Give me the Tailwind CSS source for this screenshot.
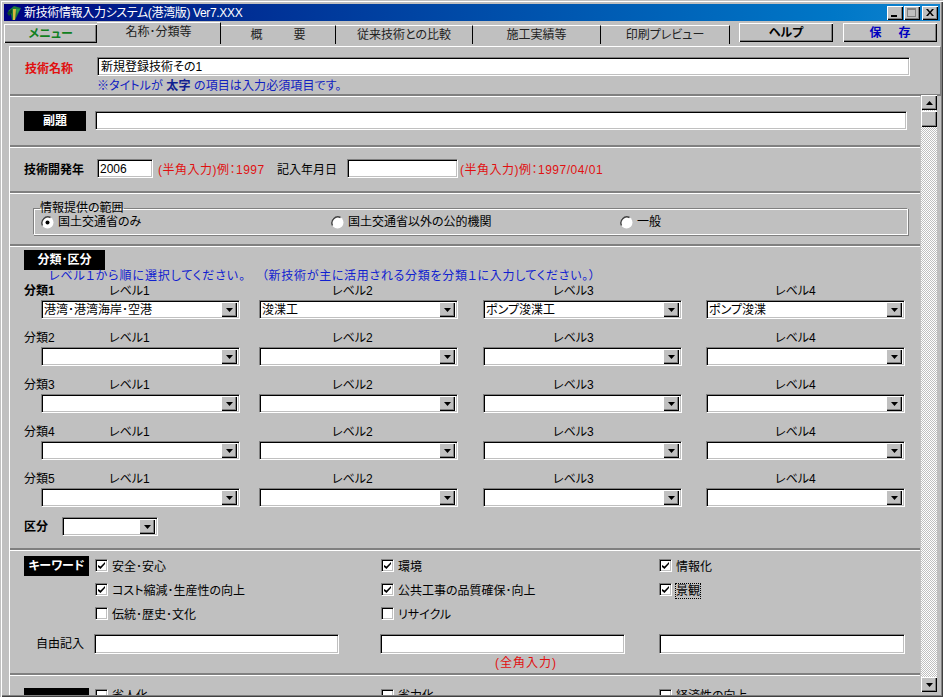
<!DOCTYPE html>
<html lang="ja">
  <head>
    <meta charset="UTF-8" />
    <title>新技術情報入力システム(港湾版) Ver7.XXX</title>
    <script src="https://cdn.jsdelivr.net/npm/@tailwindcss/browser@4"></script>
  </head>
  <body class="bg-[#c0c0c0]">
    <div class="w-[943px] h-[697px] overflow-hidden flex flex-col bg-[#c0c0c0] pt-[4px] pb-[2px] pl-[4px] pr-[3px] text-[12px] leading-[14px] text-black [font-feature-settings:'palt'] font-['Liberation_Sans','Noto_Sans_CJK_JP',sans-serif] shadow-[inset_1px_1px_0_#c0c0c0,inset_2px_2px_0_#fff,inset_-1px_-1px_0_#404040,inset_-2px_-2px_0_#808080]">
      <!-- title bar -->
      <div class="h-[17px] shrink-0 flex items-center justify-between bg-gradient-to-r from-[#000080] to-[#1084d0] pl-[2px] pr-[2px]">
        <div class="flex items-center gap-[2px] text-white">
          <svg width="16" height="16" viewBox="0 0 16 16">
            <path d="M2 6 L8 1 L15 3 L12 9 L9 15 L6 15 L5 9Z" fill="#1f7a3a" />
            <path d="M1 8 L6 4 L6 8 L3 11Z" fill="#0c4a2a" />
            <path d="M7 4 L10 4 L9 15 L7 15Z" fill="#d8b840" />
            <path d="M10 4 L14 4 L11 9Z" fill="#2a9a50" />
          </svg>
          <span class="tracking-[-0.35px]">新技術情報入力システム(港湾版) Ver7.XXX</span>
        </div>
        <div class="flex gap-[1px] items-center">
          <div class="w-[16px] h-[14px] flex items-end pl-[4px] pb-[3px] bg-[#c0c0c0] shadow-[inset_1px_1px_0_#fff,inset_-1px_-1px_0_#000,inset_-2px_-2px_0_#808080]"><div class="w-[6px] h-[2px] bg-black"></div></div>
          <div class="w-[16px] h-[14px] flex items-center justify-center pr-[1px] bg-[#c0c0c0] shadow-[inset_1px_1px_0_#fff,inset_-1px_-1px_0_#000,inset_-2px_-2px_0_#808080]"><div class="w-[9px] h-[9px] border border-t-2 border-[#808080]"></div></div>
          <div class="w-[16px] h-[14px] ml-[1px] flex items-center justify-center pr-[1px] bg-[#c0c0c0] shadow-[inset_1px_1px_0_#fff,inset_-1px_-1px_0_#000,inset_-2px_-2px_0_#808080]">
            <svg width="8" height="7" viewBox="0 0 8 7"><path d="M0 0 L2 0 L4 2.5 L6 0 L8 0 L5 3.5 L8 7 L6 7 L4 4.5 L2 7 L0 7 L3 3.5Z" fill="#000" /></svg>
          </div>
        </div>
      </div>

      <!-- tabs -->
      <div class="h-[22px] mt-[1px] shrink-0 flex items-stretch text-[#222]">
        <div class="w-[93px] mt-[2px] mb-[1px] flex items-center justify-center font-bold text-[#108020] bg-[#c0c0c0] shadow-[inset_1px_1px_0_#fff,inset_-1px_-1px_0_#000,inset_-2px_-2px_0_#808080]">メニュー</div>
        <div class="w-[124px] flex items-center justify-center pb-[3px] border-t border-white border-r border-r-black">名称･分類等</div>
        <div class="w-[115px] mt-[3px] flex items-center justify-center border-t border-white border-r border-r-black"><span class="w-[55px] flex justify-between"><span>概</span><span>要</span></span></div>
        <div class="w-[137px] mt-[3px] flex items-center justify-center border-t border-white border-r border-r-black">従来技術との比較</div>
        <div class="w-[128px] mt-[3px] flex items-center justify-center border-t border-white border-r border-r-black">施工実績等</div>
        <div class="w-[129px] mt-[3px] flex items-center justify-center border-t border-white border-r border-r-black">印刷プレビュー</div>
        <div class="w-[94px] ml-[9px] mt-[1px] mb-[2px] flex items-center justify-center font-bold text-black bg-[#c0c0c0] shadow-[inset_1px_1px_0_#fff,inset_-1px_-1px_0_#000,inset_-2px_-2px_0_#808080]">ヘルプ</div>
        <div class="w-[94px] ml-[10px] mt-[1px] mb-[2px] flex items-center justify-center font-bold text-[#0000c0] bg-[#c0c0c0] shadow-[inset_1px_1px_0_#fff,inset_-1px_-1px_0_#000,inset_-2px_-2px_0_#808080]"><span class="w-[41px] flex justify-between"><span>保</span><span>存</span></span></div>
      </div>

      <!-- tab panel -->
      <div class="flex-1 min-h-0 ml-[5px] mt-[2px] flex flex-col border-l border-white">
        <!-- name section -->
        <div class="h-[50px] shrink-0 border-t border-white border-r border-r-[#808080] mr-[-1px] border-b-2 border-b-[#808080] flex pt-[10px] pl-[15px]">
          <div class="w-[72px] pt-[5px] font-bold text-[#e01010]">技術名称</div>
          <div class="flex flex-col">
            <div class="w-[813px] h-[19px] flex items-center pl-[3px] bg-white border border-t-[#808080] border-l-[#808080] border-r-[#ffffff] border-b-[#ffffff] shadow-[inset_1px_1px_0_#000,inset_-1px_-1px_0_#c0c0c0]">新規登録技術その1</div>
            <div class="mt-[3px] text-[#1020c0] tracking-[0.1px]">※タイトルが <b class="text-[#102090]">太字</b> の項目は入力必須項目です。</div>
          </div>
        </div>

        <div class="flex-1 min-h-0 flex">
          <div class="w-[910px] shrink-0 flex flex-col overflow-hidden">
            <!-- 副題 -->
            <div class="h-[51px] shrink-0 border-t border-white border-b-2 border-b-[#808080] flex items-start pt-[14px] pl-[14px]">
              <div class="w-[62px] h-[20px] bg-black text-white font-bold flex items-center justify-center">副題</div>
              <div class="w-[812px] h-[19px] ml-[9px] bg-white border border-t-[#808080] border-l-[#808080] border-r-white border-b-white shadow-[inset_1px_1px_0_#000,inset_-1px_-1px_0_#c0c0c0]"></div>
            </div>

            <!-- 開発年 -->
            <div class="h-[46px] shrink-0 border-t border-white border-b-2 border-b-[#808080] flex items-start pt-[11px] pl-[14px]">
              <div class="w-[73px] pt-[4px] font-bold">技術開発年</div>
              <div class="w-[56px] h-[19px] flex items-center pl-[2px] bg-white border border-t-[#808080] border-l-[#808080] border-r-white border-b-white shadow-[inset_1px_1px_0_#000,inset_-1px_-1px_0_#c0c0c0]">2006</div>
              <div class="w-[124px] pl-[5px] pt-[4px] text-[#e01010] whitespace-nowrap tracking-[0.5px]">(半角入力)例：1997</div>
              <div class="w-[70px] pt-[4px] whitespace-nowrap">記入年月日</div>
              <div class="w-[111px] h-[19px] bg-white border border-t-[#808080] border-l-[#808080] border-r-white border-b-white shadow-[inset_1px_1px_0_#000,inset_-1px_-1px_0_#c0c0c0]"></div>
              <div class="pl-[2px] pt-[4px] text-[#e01010] whitespace-nowrap tracking-[0.5px]">(半角入力)例：1997/04/01</div>
            </div>

            <!-- 情報提供の範囲 -->
            <div class="h-[53px] shrink-0 border-t border-white border-b-2 border-b-[#808080] pt-[8px] pl-[23px]">
              <fieldset class="w-[875px] h-[33px] pb-[4px] border border-t-[#808080] border-l-[#808080] border-r-white border-b-white shadow-[inset_1px_1px_0_#fff,1px_1px_0_#808080] flex items-center">
                <legend class="ml-[6px] leading-[12px]">情報提供の範囲</legend>
                <div class="flex items-center pl-[7px] w-[297px]">
                  <svg width="13" height="13" viewBox="0 0 13 13"><circle cx="6.5" cy="6.5" r="6" fill="#fff" /><path d="M1.5 9.5 A6 6 0 0 1 9.5 1.5" stroke="#404040" stroke-width="1.4" fill="none" /><circle cx="6.5" cy="6.5" r="2" fill="#000" /></svg>
                  <span class="ml-[4px]">国土交通省のみ</span>
                </div>
                <div class="flex items-center w-[289px]">
                  <svg width="13" height="13" viewBox="0 0 13 13"><circle cx="6.5" cy="6.5" r="6" fill="#fff" /><path d="M1.5 9.5 A6 6 0 0 1 9.5 1.5" stroke="#404040" stroke-width="1.4" fill="none" /></svg>
                  <span class="ml-[4px]">国土交通省以外の公的機関</span>
                </div>
                <div class="flex items-center">
                  <svg width="13" height="13" viewBox="0 0 13 13"><circle cx="6.5" cy="6.5" r="6" fill="#fff" /><path d="M1.5 9.5 A6 6 0 0 1 9.5 1.5" stroke="#404040" stroke-width="1.4" fill="none" /></svg>
                  <span class="ml-[4px]">一般</span>
                </div>
              </fieldset>
            </div>

            <!-- 分類・区分 -->
            <div class="h-[304px] shrink-0 border-t border-white border-b-2 border-b-[#808080] pt-[3px] pl-[14px]">
              <div class="w-[81px] h-[20px] bg-black text-white font-bold flex items-center justify-center">分類･区分</div>
              <div class="pl-[25px] mt-[-1px] h-[14px] text-[#1020d0] whitespace-nowrap"><span class="tracking-[0.9px]">レベル１から順に選択してください。</span><span class="ml-[16px] tracking-[0.7px]">（新技術が主に活用される分類を分類１に入力してください。）</span></div>

              <div class="flex h-[14px] mt-[1px]"><b class="w-[85px]">分類1</b><span class="w-[223px]">レベル1</span><span class="w-[221px]">レベル2</span><span class="w-[222px]">レベル3</span><span>レベル4</span></div>
              <div class="flex pl-[17px] h-[33px] mt-[2px]">
                <div class="w-[199px] h-[19px] flex items-center justify-between pl-[2px] pr-[2px] bg-white border border-t-[#808080] border-l-[#808080] border-r-white border-b-white shadow-[inset_1px_1px_0_#000,inset_-1px_-1px_0_#c0c0c0]"><span>港湾･港湾海岸･空港</span><span class="w-[16px] h-[15px] flex items-center justify-center bg-[#c0c0c0] shadow-[inset_1px_1px_0_#fff,inset_-1px_-1px_0_#000,inset_-2px_-2px_0_#808080]"><svg width="7" height="4" viewBox="0 0 7 4"><path d="M0 0 H7 L3.5 4Z" /></svg></span></div>
                <div class="w-[199px] h-[19px] ml-[19px] flex items-center justify-between pl-[2px] pr-[2px] bg-white border border-t-[#808080] border-l-[#808080] border-r-white border-b-white shadow-[inset_1px_1px_0_#000,inset_-1px_-1px_0_#c0c0c0]"><span>浚渫工</span><span class="w-[16px] h-[15px] flex items-center justify-center bg-[#c0c0c0] shadow-[inset_1px_1px_0_#fff,inset_-1px_-1px_0_#000,inset_-2px_-2px_0_#808080]"><svg width="7" height="4" viewBox="0 0 7 4"><path d="M0 0 H7 L3.5 4Z" /></svg></span></div>
                <div class="w-[199px] h-[19px] ml-[25px] flex items-center justify-between pl-[2px] pr-[2px] bg-white border border-t-[#808080] border-l-[#808080] border-r-white border-b-white shadow-[inset_1px_1px_0_#000,inset_-1px_-1px_0_#c0c0c0]"><span>ポンプ浚渫工</span><span class="w-[16px] h-[15px] flex items-center justify-center bg-[#c0c0c0] shadow-[inset_1px_1px_0_#fff,inset_-1px_-1px_0_#000,inset_-2px_-2px_0_#808080]"><svg width="7" height="4" viewBox="0 0 7 4"><path d="M0 0 H7 L3.5 4Z" /></svg></span></div>
                <div class="w-[199px] h-[19px] ml-[24px] flex items-center justify-between pl-[2px] pr-[2px] bg-white border border-t-[#808080] border-l-[#808080] border-r-white border-b-white shadow-[inset_1px_1px_0_#000,inset_-1px_-1px_0_#c0c0c0]"><span>ポンプ浚渫</span><span class="w-[16px] h-[15px] flex items-center justify-center bg-[#c0c0c0] shadow-[inset_1px_1px_0_#fff,inset_-1px_-1px_0_#000,inset_-2px_-2px_0_#808080]"><svg width="7" height="4" viewBox="0 0 7 4"><path d="M0 0 H7 L3.5 4Z" /></svg></span></div>
              </div>

              <div class="flex h-[14px] -mt-[2px] mb-[2px]"><span class="w-[85px]">分類2</span><span class="w-[223px]">レベル1</span><span class="w-[221px]">レベル2</span><span class="w-[222px]">レベル3</span><span>レベル4</span></div>
              <div class="flex pl-[17px] h-[33px]">
                <div class="w-[199px] h-[19px] flex items-center justify-end pr-[2px] bg-white border border-t-[#808080] border-l-[#808080] border-r-white border-b-white shadow-[inset_1px_1px_0_#000,inset_-1px_-1px_0_#c0c0c0]"><span class="w-[16px] h-[15px] flex items-center justify-center bg-[#c0c0c0] shadow-[inset_1px_1px_0_#fff,inset_-1px_-1px_0_#000,inset_-2px_-2px_0_#808080]"><svg width="7" height="4" viewBox="0 0 7 4"><path d="M0 0 H7 L3.5 4Z" /></svg></span></div>
                <div class="w-[199px] h-[19px] ml-[19px] flex items-center justify-end pr-[2px] bg-white border border-t-[#808080] border-l-[#808080] border-r-white border-b-white shadow-[inset_1px_1px_0_#000,inset_-1px_-1px_0_#c0c0c0]"><span class="w-[16px] h-[15px] flex items-center justify-center bg-[#c0c0c0] shadow-[inset_1px_1px_0_#fff,inset_-1px_-1px_0_#000,inset_-2px_-2px_0_#808080]"><svg width="7" height="4" viewBox="0 0 7 4"><path d="M0 0 H7 L3.5 4Z" /></svg></span></div>
                <div class="w-[199px] h-[19px] ml-[25px] flex items-center justify-end pr-[2px] bg-white border border-t-[#808080] border-l-[#808080] border-r-white border-b-white shadow-[inset_1px_1px_0_#000,inset_-1px_-1px_0_#c0c0c0]"><span class="w-[16px] h-[15px] flex items-center justify-center bg-[#c0c0c0] shadow-[inset_1px_1px_0_#fff,inset_-1px_-1px_0_#000,inset_-2px_-2px_0_#808080]"><svg width="7" height="4" viewBox="0 0 7 4"><path d="M0 0 H7 L3.5 4Z" /></svg></span></div>
                <div class="w-[199px] h-[19px] ml-[24px] flex items-center justify-end pr-[2px] bg-white border border-t-[#808080] border-l-[#808080] border-r-white border-b-white shadow-[inset_1px_1px_0_#000,inset_-1px_-1px_0_#c0c0c0]"><span class="w-[16px] h-[15px] flex items-center justify-center bg-[#c0c0c0] shadow-[inset_1px_1px_0_#fff,inset_-1px_-1px_0_#000,inset_-2px_-2px_0_#808080]"><svg width="7" height="4" viewBox="0 0 7 4"><path d="M0 0 H7 L3.5 4Z" /></svg></span></div>
              </div>

              <div class="flex h-[14px] -mt-[2px] mb-[2px]"><span class="w-[85px]">分類3</span><span class="w-[223px]">レベル1</span><span class="w-[221px]">レベル2</span><span class="w-[222px]">レベル3</span><span>レベル4</span></div>
              <div class="flex pl-[17px] h-[33px]">
                <div class="w-[199px] h-[19px] flex items-center justify-end pr-[2px] bg-white border border-t-[#808080] border-l-[#808080] border-r-white border-b-white shadow-[inset_1px_1px_0_#000,inset_-1px_-1px_0_#c0c0c0]"><span class="w-[16px] h-[15px] flex items-center justify-center bg-[#c0c0c0] shadow-[inset_1px_1px_0_#fff,inset_-1px_-1px_0_#000,inset_-2px_-2px_0_#808080]"><svg width="7" height="4" viewBox="0 0 7 4"><path d="M0 0 H7 L3.5 4Z" /></svg></span></div>
                <div class="w-[199px] h-[19px] ml-[19px] flex items-center justify-end pr-[2px] bg-white border border-t-[#808080] border-l-[#808080] border-r-white border-b-white shadow-[inset_1px_1px_0_#000,inset_-1px_-1px_0_#c0c0c0]"><span class="w-[16px] h-[15px] flex items-center justify-center bg-[#c0c0c0] shadow-[inset_1px_1px_0_#fff,inset_-1px_-1px_0_#000,inset_-2px_-2px_0_#808080]"><svg width="7" height="4" viewBox="0 0 7 4"><path d="M0 0 H7 L3.5 4Z" /></svg></span></div>
                <div class="w-[199px] h-[19px] ml-[25px] flex items-center justify-end pr-[2px] bg-white border border-t-[#808080] border-l-[#808080] border-r-white border-b-white shadow-[inset_1px_1px_0_#000,inset_-1px_-1px_0_#c0c0c0]"><span class="w-[16px] h-[15px] flex items-center justify-center bg-[#c0c0c0] shadow-[inset_1px_1px_0_#fff,inset_-1px_-1px_0_#000,inset_-2px_-2px_0_#808080]"><svg width="7" height="4" viewBox="0 0 7 4"><path d="M0 0 H7 L3.5 4Z" /></svg></span></div>
                <div class="w-[199px] h-[19px] ml-[24px] flex items-center justify-end pr-[2px] bg-white border border-t-[#808080] border-l-[#808080] border-r-white border-b-white shadow-[inset_1px_1px_0_#000,inset_-1px_-1px_0_#c0c0c0]"><span class="w-[16px] h-[15px] flex items-center justify-center bg-[#c0c0c0] shadow-[inset_1px_1px_0_#fff,inset_-1px_-1px_0_#000,inset_-2px_-2px_0_#808080]"><svg width="7" height="4" viewBox="0 0 7 4"><path d="M0 0 H7 L3.5 4Z" /></svg></span></div>
              </div>

              <div class="flex h-[14px] -mt-[2px] mb-[2px]"><span class="w-[85px]">分類4</span><span class="w-[223px]">レベル1</span><span class="w-[221px]">レベル2</span><span class="w-[222px]">レベル3</span><span>レベル4</span></div>
              <div class="flex pl-[17px] h-[33px]">
                <div class="w-[199px] h-[19px] flex items-center justify-end pr-[2px] bg-white border border-t-[#808080] border-l-[#808080] border-r-white border-b-white shadow-[inset_1px_1px_0_#000,inset_-1px_-1px_0_#c0c0c0]"><span class="w-[16px] h-[15px] flex items-center justify-center bg-[#c0c0c0] shadow-[inset_1px_1px_0_#fff,inset_-1px_-1px_0_#000,inset_-2px_-2px_0_#808080]"><svg width="7" height="4" viewBox="0 0 7 4"><path d="M0 0 H7 L3.5 4Z" /></svg></span></div>
                <div class="w-[199px] h-[19px] ml-[19px] flex items-center justify-end pr-[2px] bg-white border border-t-[#808080] border-l-[#808080] border-r-white border-b-white shadow-[inset_1px_1px_0_#000,inset_-1px_-1px_0_#c0c0c0]"><span class="w-[16px] h-[15px] flex items-center justify-center bg-[#c0c0c0] shadow-[inset_1px_1px_0_#fff,inset_-1px_-1px_0_#000,inset_-2px_-2px_0_#808080]"><svg width="7" height="4" viewBox="0 0 7 4"><path d="M0 0 H7 L3.5 4Z" /></svg></span></div>
                <div class="w-[199px] h-[19px] ml-[25px] flex items-center justify-end pr-[2px] bg-white border border-t-[#808080] border-l-[#808080] border-r-white border-b-white shadow-[inset_1px_1px_0_#000,inset_-1px_-1px_0_#c0c0c0]"><span class="w-[16px] h-[15px] flex items-center justify-center bg-[#c0c0c0] shadow-[inset_1px_1px_0_#fff,inset_-1px_-1px_0_#000,inset_-2px_-2px_0_#808080]"><svg width="7" height="4" viewBox="0 0 7 4"><path d="M0 0 H7 L3.5 4Z" /></svg></span></div>
                <div class="w-[199px] h-[19px] ml-[24px] flex items-center justify-end pr-[2px] bg-white border border-t-[#808080] border-l-[#808080] border-r-white border-b-white shadow-[inset_1px_1px_0_#000,inset_-1px_-1px_0_#c0c0c0]"><span class="w-[16px] h-[15px] flex items-center justify-center bg-[#c0c0c0] shadow-[inset_1px_1px_0_#fff,inset_-1px_-1px_0_#000,inset_-2px_-2px_0_#808080]"><svg width="7" height="4" viewBox="0 0 7 4"><path d="M0 0 H7 L3.5 4Z" /></svg></span></div>
              </div>

              <div class="flex h-[14px] -mt-[2px] mb-[2px]"><span class="w-[85px]">分類5</span><span class="w-[223px]">レベル1</span><span class="w-[221px]">レベル2</span><span class="w-[222px]">レベル3</span><span>レベル4</span></div>
              <div class="flex pl-[17px] h-[29px]">
                <div class="w-[199px] h-[19px] flex items-center justify-end pr-[2px] bg-white border border-t-[#808080] border-l-[#808080] border-r-white border-b-white shadow-[inset_1px_1px_0_#000,inset_-1px_-1px_0_#c0c0c0]"><span class="w-[16px] h-[15px] flex items-center justify-center bg-[#c0c0c0] shadow-[inset_1px_1px_0_#fff,inset_-1px_-1px_0_#000,inset_-2px_-2px_0_#808080]"><svg width="7" height="4" viewBox="0 0 7 4"><path d="M0 0 H7 L3.5 4Z" /></svg></span></div>
                <div class="w-[199px] h-[19px] ml-[19px] flex items-center justify-end pr-[2px] bg-white border border-t-[#808080] border-l-[#808080] border-r-white border-b-white shadow-[inset_1px_1px_0_#000,inset_-1px_-1px_0_#c0c0c0]"><span class="w-[16px] h-[15px] flex items-center justify-center bg-[#c0c0c0] shadow-[inset_1px_1px_0_#fff,inset_-1px_-1px_0_#000,inset_-2px_-2px_0_#808080]"><svg width="7" height="4" viewBox="0 0 7 4"><path d="M0 0 H7 L3.5 4Z" /></svg></span></div>
                <div class="w-[199px] h-[19px] ml-[25px] flex items-center justify-end pr-[2px] bg-white border border-t-[#808080] border-l-[#808080] border-r-white border-b-white shadow-[inset_1px_1px_0_#000,inset_-1px_-1px_0_#c0c0c0]"><span class="w-[16px] h-[15px] flex items-center justify-center bg-[#c0c0c0] shadow-[inset_1px_1px_0_#fff,inset_-1px_-1px_0_#000,inset_-2px_-2px_0_#808080]"><svg width="7" height="4" viewBox="0 0 7 4"><path d="M0 0 H7 L3.5 4Z" /></svg></span></div>
                <div class="w-[199px] h-[19px] ml-[24px] flex items-center justify-end pr-[2px] bg-white border border-t-[#808080] border-l-[#808080] border-r-white border-b-white shadow-[inset_1px_1px_0_#000,inset_-1px_-1px_0_#c0c0c0]"><span class="w-[16px] h-[15px] flex items-center justify-center bg-[#c0c0c0] shadow-[inset_1px_1px_0_#fff,inset_-1px_-1px_0_#000,inset_-2px_-2px_0_#808080]"><svg width="7" height="4" viewBox="0 0 7 4"><path d="M0 0 H7 L3.5 4Z" /></svg></span></div>
              </div>

              <div class="flex items-center">
                <b class="w-[38px]">区分</b>
                <div class="w-[96px] h-[19px] flex items-center justify-end pr-[2px] bg-white border border-t-[#808080] border-l-[#808080] border-r-white border-b-white shadow-[inset_1px_1px_0_#000,inset_-1px_-1px_0_#c0c0c0]"><span class="w-[16px] h-[15px] flex items-center justify-center bg-[#c0c0c0] shadow-[inset_1px_1px_0_#fff,inset_-1px_-1px_0_#000,inset_-2px_-2px_0_#808080]"><svg width="7" height="4" viewBox="0 0 7 4"><path d="M0 0 H7 L3.5 4Z" /></svg></span></div>
              </div>
            </div>

            <!-- キーワード -->
            <div class="h-[125px] shrink-0 border-t border-white border-b-2 border-b-[#808080] pt-[5px] pl-[14px]">
              <div class="flex h-[24px]">
                <div class="w-[65px] h-[20px] bg-black text-white font-bold flex items-center justify-center">キーワード</div>
                <div class="w-[286px] ml-[6px] pt-[3px] flex items-start">
                  <span class="w-[13px] h-[13px] flex items-center justify-center bg-white border border-t-[#808080] border-l-[#808080] border-r-white border-b-white shadow-[inset_1px_1px_0_#000,inset_-1px_-1px_0_#c0c0c0]"><svg width="7" height="7" viewBox="0 0 7 7"><path d="M0 3 L0 5 L2.5 7 L7 2 L7 0 L2.5 4.5Z" /></svg></span>
                  <span class="ml-[4px] mt-[1px]">安全･安心</span>
                </div>
                <div class="w-[278px] pt-[3px] flex items-start">
                  <span class="w-[13px] h-[13px] flex items-center justify-center bg-white border border-t-[#808080] border-l-[#808080] border-r-white border-b-white shadow-[inset_1px_1px_0_#000,inset_-1px_-1px_0_#c0c0c0]"><svg width="7" height="7" viewBox="0 0 7 7"><path d="M0 3 L0 5 L2.5 7 L7 2 L7 0 L2.5 4.5Z" /></svg></span>
                  <span class="ml-[4px] mt-[1px]">環境</span>
                </div>
                <div class="pt-[3px] flex items-start">
                  <span class="w-[13px] h-[13px] flex items-center justify-center bg-white border border-t-[#808080] border-l-[#808080] border-r-white border-b-white shadow-[inset_1px_1px_0_#000,inset_-1px_-1px_0_#c0c0c0]"><svg width="7" height="7" viewBox="0 0 7 7"><path d="M0 3 L0 5 L2.5 7 L7 2 L7 0 L2.5 4.5Z" /></svg></span>
                  <span class="ml-[4px] mt-[1px]">情報化</span>
                </div>
              </div>
              <div class="flex h-[24px] pl-[71px]">
                <div class="w-[286px] pt-[3px] flex items-start">
                  <span class="w-[13px] h-[13px] flex items-center justify-center bg-white border border-t-[#808080] border-l-[#808080] border-r-white border-b-white shadow-[inset_1px_1px_0_#000,inset_-1px_-1px_0_#c0c0c0]"><svg width="7" height="7" viewBox="0 0 7 7"><path d="M0 3 L0 5 L2.5 7 L7 2 L7 0 L2.5 4.5Z" /></svg></span>
                  <span class="ml-[4px] mt-[1px]">コスト縮減･生産性の向上</span>
                </div>
                <div class="w-[278px] pt-[3px] flex items-start">
                  <span class="w-[13px] h-[13px] flex items-center justify-center bg-white border border-t-[#808080] border-l-[#808080] border-r-white border-b-white shadow-[inset_1px_1px_0_#000,inset_-1px_-1px_0_#c0c0c0]"><svg width="7" height="7" viewBox="0 0 7 7"><path d="M0 3 L0 5 L2.5 7 L7 2 L7 0 L2.5 4.5Z" /></svg></span>
                  <span class="ml-[4px] mt-[1px]">公共工事の品質確保･向上</span>
                </div>
                <div class="pt-[3px] flex items-start">
                  <span class="w-[13px] h-[13px] flex items-center justify-center bg-white border border-t-[#808080] border-l-[#808080] border-r-white border-b-white shadow-[inset_1px_1px_0_#000,inset_-1px_-1px_0_#c0c0c0]"><svg width="7" height="7" viewBox="0 0 7 7"><path d="M0 3 L0 5 L2.5 7 L7 2 L7 0 L2.5 4.5Z" /></svg></span>
                  <span class="ml-[4px] mt-[1px] outline-1 outline-dotted outline-black">景観</span>
                </div>
              </div>
              <div class="flex h-[24px] pl-[71px]">
                <div class="w-[286px] pt-[3px] flex items-start">
                  <span class="w-[13px] h-[13px] bg-white border border-t-[#808080] border-l-[#808080] border-r-white border-b-white shadow-[inset_1px_1px_0_#000,inset_-1px_-1px_0_#c0c0c0]"></span>
                  <span class="ml-[4px] mt-[1px]">伝統･歴史･文化</span>
                </div>
                <div class="pt-[3px] flex items-start">
                  <span class="w-[13px] h-[13px] bg-white border border-t-[#808080] border-l-[#808080] border-r-white border-b-white shadow-[inset_1px_1px_0_#000,inset_-1px_-1px_0_#c0c0c0]"></span>
                  <span class="ml-[4px] mt-[1px]">リサイクル</span>
                </div>
              </div>
              <div class="flex items-start mt-[6px]">
                <div class="w-[70px] pl-[12px] pt-[3px]">自由記入</div>
                <div class="w-[245px] h-[20px] bg-white border border-t-[#808080] border-l-[#808080] border-r-white border-b-white shadow-[inset_1px_1px_0_#000,inset_-1px_-1px_0_#c0c0c0]"></div>
                <div class="w-[245px] ml-[41px]">
                  <div class="h-[20px] bg-white border border-t-[#808080] border-l-[#808080] border-r-white border-b-white shadow-[inset_1px_1px_0_#000,inset_-1px_-1px_0_#c0c0c0]"></div>
                  <div class="pl-[115px] mt-[2px] text-[#e01010] whitespace-nowrap tracking-[1px]">(全角入力)</div>
                </div>
                <div class="w-[246px] h-[20px] ml-[34px] bg-white border border-t-[#808080] border-l-[#808080] border-r-white border-b-white shadow-[inset_1px_1px_0_#000,inset_-1px_-1px_0_#c0c0c0]"></div>
              </div>
            </div>

            <!-- next section, cut off by the window -->
            <div class="flex-1 min-h-0 overflow-hidden border-t border-white pt-[12px] pl-[14px]">
              <div class="flex h-[24px]">
                <div class="w-[65px] h-[20px] bg-black"></div>
                <div class="w-[286px] ml-[6px] pt-[1px] flex items-start">
                  <span class="w-[13px] h-[13px] bg-white border border-t-[#808080] border-l-[#808080] border-r-white border-b-white shadow-[inset_1px_1px_0_#000,inset_-1px_-1px_0_#c0c0c0]"></span>
                  <span class="ml-[4px]">省人化</span>
                </div>
                <div class="w-[278px] pt-[1px] flex items-start">
                  <span class="w-[13px] h-[13px] bg-white border border-t-[#808080] border-l-[#808080] border-r-white border-b-white shadow-[inset_1px_1px_0_#000,inset_-1px_-1px_0_#c0c0c0]"></span>
                  <span class="ml-[4px]">省力化</span>
                </div>
                <div class="pt-[1px] flex items-start">
                  <span class="w-[13px] h-[13px] bg-white border border-t-[#808080] border-l-[#808080] border-r-white border-b-white shadow-[inset_1px_1px_0_#000,inset_-1px_-1px_0_#c0c0c0]"></span>
                  <span class="ml-[4px]">経済性の向上</span>
                </div>
              </div>
            </div>
          </div>

          <!-- scrollbar -->
          <div class="w-[16px] ml-[1px] -mt-[1px] h-[597px] flex flex-col bg-[repeating-conic-gradient(#fff_0_25%,#c0c0c0_0_50%)] bg-[length:2px_2px]">
            <div class="h-[15px] shrink-0 flex items-center justify-center bg-[#c0c0c0] shadow-[inset_1px_1px_0_#fff,inset_-1px_-1px_0_#000,inset_-2px_-2px_0_#808080]"><svg width="7" height="4" viewBox="0 0 7 4"><path d="M0 4 H7 L3.5 0Z" /></svg></div>
            <div class="h-[16px] mt-[1px] shrink-0 bg-[#c0c0c0] shadow-[inset_1px_1px_0_#fff,inset_-1px_-1px_0_#000,inset_-2px_-2px_0_#808080]"></div>
            <div class="flex-1"></div>
            <div class="h-[15px] shrink-0 flex items-center justify-center bg-[#c0c0c0] shadow-[inset_1px_1px_0_#fff,inset_-1px_-1px_0_#000,inset_-2px_-2px_0_#808080]"><svg width="7" height="4" viewBox="0 0 7 4"><path d="M0 0 H7 L3.5 4Z" /></svg></div>
          </div>
        </div>
      </div>
    </div>
  </body>
</html>
